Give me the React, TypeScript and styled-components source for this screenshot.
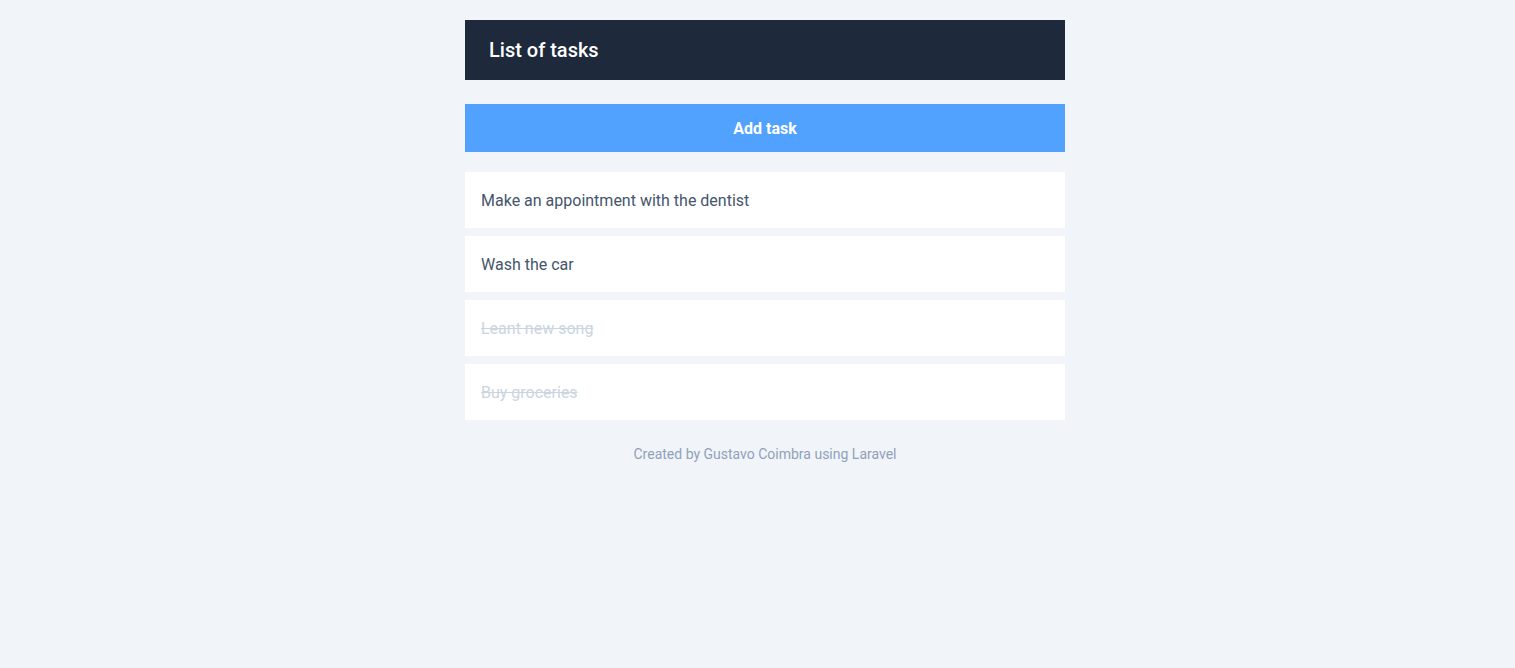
import React from "react";
import styled, { createGlobalStyle } from "styled-components";

const GlobalStyle = createGlobalStyle`
  html, body { margin: 0; padding: 0; background: #f1f5f9; }
  body { font-family: Roboto, "Liberation Sans", sans-serif; }
  * { box-sizing: border-box; }
`;

const Page = styled.main`
  display: flex;
  justify-content: center;
  padding: 20px 0 0 15px;
`;

const Container = styled.div`
  width: 600px;
  display: flex;
  flex-direction: column;
`;

const Header = styled.header`
  height: 60px;
  background: #1e293b;
  display: flex;
  align-items: center;
  padding: 0 24px;
`;

const Title = styled.h1`
  margin: 0;
  color: #fff;
  font-size: 20px;
  font-weight: 500;
`;

const AddButton = styled.button`
  margin-top: 24px;
  height: 48px;
  border: none;
  background: #51a2ff;
  color: #fff;
  font-family: inherit;
  font-size: 16px;
  font-weight: 700;
  cursor: pointer;
`;

const List = styled.ul`
  list-style: none;
  margin: 20px 0 0;
  padding: 0;
  display: flex;
  flex-direction: column;
  gap: 8px;
`;

const Item = styled.li<{ $done?: boolean }>`
  height: 56px;
  background: #fff;
  display: flex;
  align-items: center;
  padding: 0 16px;
  font-size: 16px;
  color: ${(p) => (p.$done ? "#cbd5e1" : "#45556c")};
  text-decoration: ${(p) => (p.$done ? "line-through" : "none")};
`;

const Footer = styled.footer`
  margin-top: 24px;
  text-align: center;
  font-size: 14px;
  line-height: 20px;
  color: #90a1b9;
`;

const tasks = [
  { title: "Make an appointment with the dentist", done: false },
  { title: "Wash the car", done: false },
  { title: "Leant new song", done: true },
  { title: "Buy groceries", done: true },
];

export default function App() {
  return (
    <>
      <GlobalStyle />
      <Page>
        <Container>
          <Header>
            <Title>List of tasks</Title>
          </Header>
          <AddButton>Add task</AddButton>
          <List>
            {tasks.map((t) => (
              <Item key={t.title} $done={t.done}>
                {t.title}
              </Item>
            ))}
          </List>
          <Footer>Created by Gustavo Coimbra using Laravel</Footer>
        </Container>
      </Page>
    </>
  );
}
